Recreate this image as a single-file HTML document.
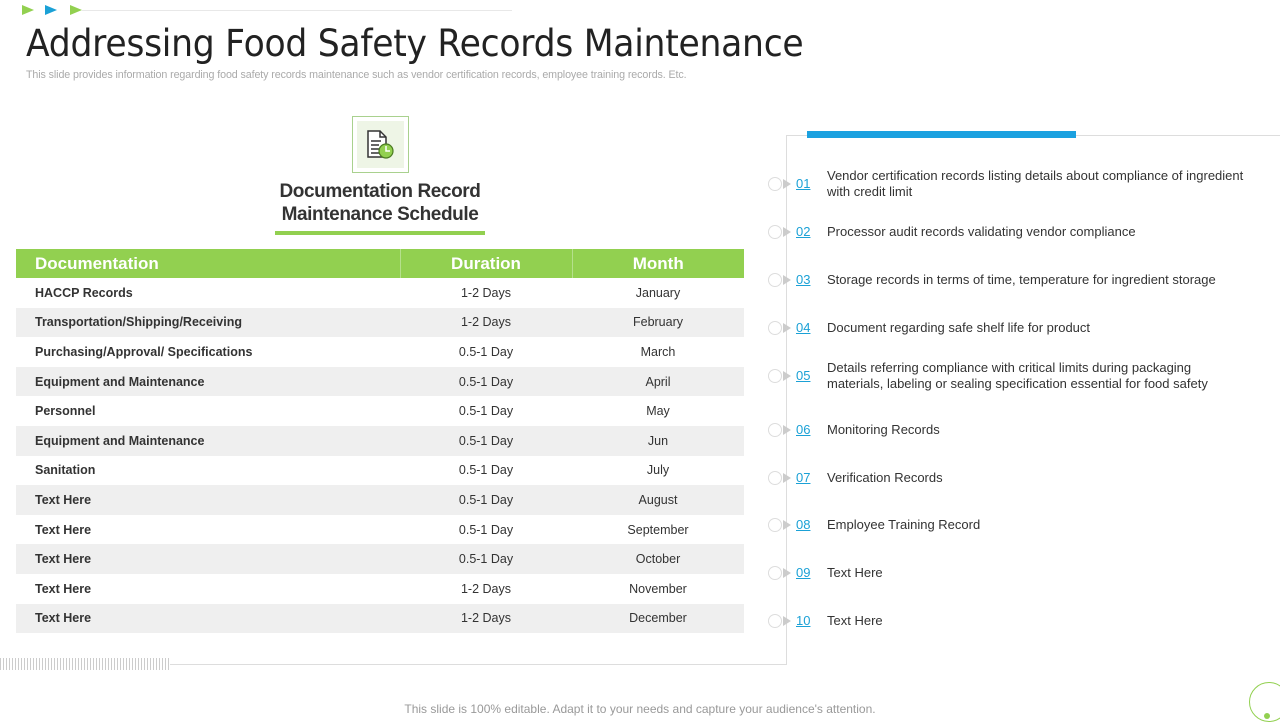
<!DOCTYPE html>
<html><head><meta charset="utf-8"><style>
*{margin:0;padding:0;box-sizing:border-box}
body{width:1280px;height:720px;background:#fff;position:relative;overflow:hidden;font-family:"Liberation Sans",sans-serif;color:#333}
.abs{position:absolute}
table{position:absolute;left:16px;top:249px;width:728px;border-collapse:collapse}
th{background:#92d050;color:#fff;font-size:17px;font-weight:bold;height:29px;text-align:center;border-left:1px solid #b5e08c}
th:first-child{text-align:left;padding-left:19px;border-left:none}
td{height:29.6px;font-size:12.5px;text-align:center;color:#333}
td:first-child{text-align:left;padding-left:19px;font-weight:bold}
tbody tr:nth-child(even) td{background:#efefef}
tbody tr:nth-child(odd) td{background:#fff}
.it{position:absolute;left:768px;width:500px;font-size:13px;color:#333}
.it .c{position:absolute;left:0;top:-7px;width:14px;height:14px;border:1px solid #ddd;border-radius:50%}
.it .t{position:absolute;left:15px;top:-5px;width:0;height:0;border-left:8px solid #ccc;border-top:5px solid transparent;border-bottom:5px solid transparent}
.it .n{position:absolute;left:28px;top:-8px;color:#1ba1d6;text-decoration:underline}
.it .x{position:absolute;left:59px;width:425px;line-height:16px;transform:translateY(-50%)}
</style></head><body>
<div class="abs" style="left:22px;top:5px;width:0;height:0;border-left:12px solid #92d050;border-top:5px solid transparent;border-bottom:5px solid transparent"></div>
<div class="abs" style="left:45px;top:5px;width:0;height:0;border-left:12px solid #1ba1d6;border-top:5px solid transparent;border-bottom:5px solid transparent"></div>
<div class="abs" style="left:70px;top:5px;width:0;height:0;border-left:12px solid #92d050;border-top:5px solid transparent;border-bottom:5px solid transparent"></div>
<div class="abs" style="left:82px;top:10px;width:430px;height:1px;background:#e8e8e8"></div>
<div class="abs" style="left:26px;top:22px;font-size:37px;color:#222;letter-spacing:-0.3px;font-family:'DejaVu Sans','Liberation Sans',sans-serif;transform:scaleX(0.935);transform-origin:left">Addressing Food Safety Records Maintenance</div>
<div class="abs" style="left:26px;top:69px;font-size:10.7px;color:#aaa;letter-spacing:-0.1px">This slide provides information regarding food safety records maintenance such as vendor certification records, employee training records. Etc.</div>

<div class="abs" style="left:352px;top:116px;width:57px;height:57px;border:1px solid #a9d18e;background:#fff"></div>
<div class="abs" style="left:357px;top:121px;width:47px;height:47px;background:#eef5e6"></div>
<svg class="abs" style="left:364px;top:129px" width="32" height="32" viewBox="0 0 32 32"><path d="M4 2h12l6 6v20H4z" fill="#fff" stroke="#333" stroke-width="1.5"/><path d="M16 2v6h6" fill="none" stroke="#333" stroke-width="1.5"/><path d="M7 12h10M7 16h8M7 20h8M7 24h8" stroke="#333" stroke-width="1.5"/><circle cx="22" cy="22" r="7" fill="#92d050" stroke="#4a7a20" stroke-width="1.2"/><path d="M22 17v5h4" stroke="#fff" stroke-width="1.5" fill="none"/></svg>
<div class="abs" style="left:260px;top:180px;width:240px;text-align:center;font-size:19px;font-weight:bold;line-height:23px;color:#333;letter-spacing:-0.4px">Documentation Record<br>Maintenance Schedule</div>
<div class="abs" style="left:275px;top:231px;width:210px;height:4px;background:#92d050"></div>

<table>
<thead><tr><th style="width:384px">Documentation</th><th style="width:172px">Duration</th><th>Month</th></tr></thead>
<tbody>
<tr><td>HACCP Records</td><td>1-2 Days</td><td>January</td></tr>
<tr><td>Transportation/Shipping/Receiving</td><td>1-2 Days</td><td>February</td></tr>
<tr><td>Purchasing/Approval/ Specifications</td><td>0.5-1 Day</td><td>March</td></tr>
<tr><td>Equipment and Maintenance</td><td>0.5-1 Day</td><td>April</td></tr>
<tr><td>Personnel</td><td>0.5-1 Day</td><td>May</td></tr>
<tr><td>Equipment and Maintenance</td><td>0.5-1 Day</td><td>Jun</td></tr>
<tr><td>Sanitation</td><td>0.5-1 Day</td><td>July</td></tr>
<tr><td>Text Here</td><td>0.5-1 Day</td><td>August</td></tr>
<tr><td>Text Here</td><td>0.5-1 Day</td><td>September</td></tr>
<tr><td>Text Here</td><td>0.5-1 Day</td><td>October</td></tr>
<tr><td>Text Here</td><td>1-2 Days</td><td>November</td></tr>
<tr><td>Text Here</td><td>1-2 Days</td><td>December</td></tr>
</tbody>
</table>

<div class="abs" style="left:786px;top:135px;width:494px;height:1px;background:#ddd"></div>
<div class="abs" style="left:786px;top:135px;width:1px;height:530px;background:#ddd"></div>
<div class="abs" style="left:807px;top:131px;width:269px;height:7px;background:#1ba1e0"></div>
<div class="abs" style="left:170px;top:664px;width:617px;height:1px;background:#ddd"></div>
<div class="abs" style="left:0;top:658px;width:170px;height:12px;background:repeating-linear-gradient(90deg,#ccc 0 1px,transparent 1px 3px)"></div>

<div class="it" style="top:184px"><span class="c"></span><span class="t"></span><span class="n">01</span><span class="x">Vendor certification records listing details about compliance of ingredient with credit limit</span></div>
<div class="it" style="top:232px"><span class="c"></span><span class="t"></span><span class="n">02</span><span class="x">Processor audit records validating vendor  compliance</span></div>
<div class="it" style="top:280px"><span class="c"></span><span class="t"></span><span class="n">03</span><span class="x">Storage records in terms of time, temperature for ingredient storage</span></div>
<div class="it" style="top:328px"><span class="c"></span><span class="t"></span><span class="n">04</span><span class="x">Document regarding  safe shelf life for product</span></div>
<div class="it" style="top:376px"><span class="c"></span><span class="t"></span><span class="n">05</span><span class="x" style="width:400px">Details referring  compliance with critical limits during packaging materials, labeling or sealing specification essential for food safety</span></div>
<div class="it" style="top:430px"><span class="c"></span><span class="t"></span><span class="n">06</span><span class="x">Monitoring Records</span></div>
<div class="it" style="top:478px"><span class="c"></span><span class="t"></span><span class="n">07</span><span class="x">Verification Records</span></div>
<div class="it" style="top:525px"><span class="c"></span><span class="t"></span><span class="n">08</span><span class="x">Employee Training Record</span></div>
<div class="it" style="top:573px"><span class="c"></span><span class="t"></span><span class="n">09</span><span class="x">Text Here</span></div>
<div class="it" style="top:621px"><span class="c"></span><span class="t"></span><span class="n">10</span><span class="x">Text Here</span></div>

<div class="abs" style="left:0;top:702px;width:1280px;text-align:center;font-size:12px;color:#999">This slide is 100% editable. Adapt it to your needs and capture your audience's attention.</div>
<div class="abs" style="left:1249px;top:682px;width:40px;height:40px;border:1.5px solid #92d050;border-radius:50%"></div>
<div class="abs" style="left:1264px;top:713px;width:6px;height:6px;background:#92d050;border-radius:50%"></div>
</body></html>
